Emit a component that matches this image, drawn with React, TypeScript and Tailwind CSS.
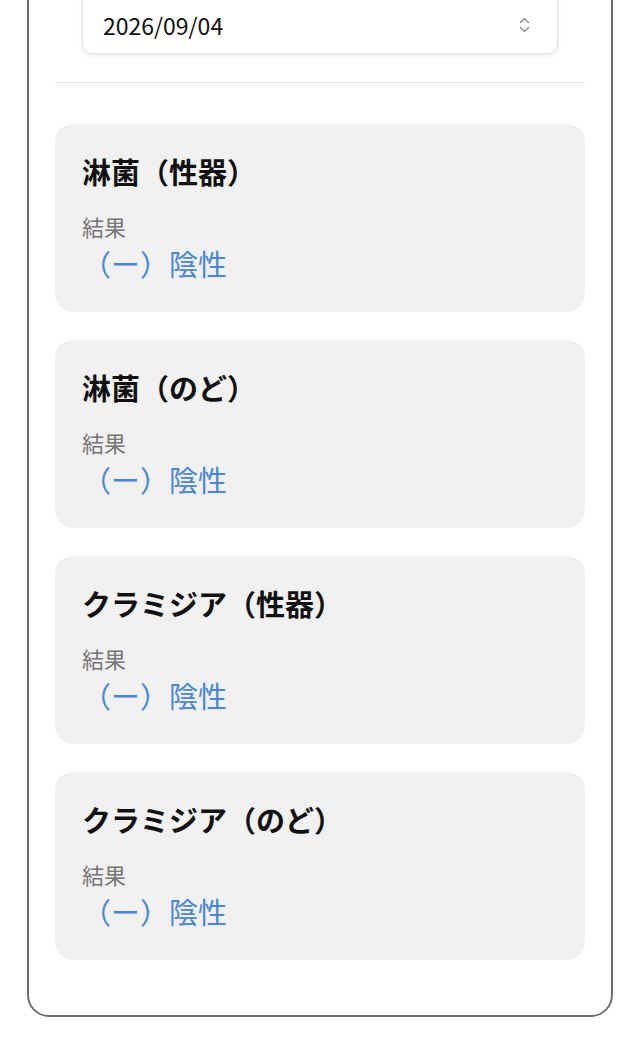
import React from 'react';

const results = [
  { id: 1, name: '淋菌（性器）', value: '（ー）陰性' },
  { id: 2, name: '淋菌（のど）', value: '（ー）陰性' },
  { id: 3, name: 'クラミジア（性器）', value: '（ー）陰性' },
  { id: 4, name: 'クラミジア（のど）', value: '（ー）陰性' },
];

// small up/down chevron used in the native date select
const UpDownIcon = () => (
  <svg width="11" height="16" viewBox="0 0 11 16" fill="none" className="text-[#8e8e8e]">
    <path d="M1.5 5.5 L5.5 1.5 L9.5 5.5" stroke="currentColor" strokeWidth="1.4" strokeLinecap="round" strokeLinejoin="round" />
    <path d="M1.5 10.5 L5.5 14.5 L9.5 10.5" stroke="currentColor" strokeWidth="1.4" strokeLinecap="round" strokeLinejoin="round" />
  </svg>
);

const ResultCard = ({ name, value }: { name: string; value: string }) => (
  <div className="bg-[#f1f1f1] rounded-[18px] px-[27px] pt-[28px] pb-[29px]">
    <div className="text-[29px] leading-[38px] font-bold text-[#111]">{name}</div>
    <div className="mt-[21px] text-[22px] leading-[30px] text-[#767676]">結果</div>
    <div className="mt-[2px] text-[29px] leading-[40px] text-[#4a86d6]">{value}</div>
  </div>
);

const App = () => {
  return (
    <div
      className="min-h-screen bg-white px-[27px] pb-[38px] overflow-hidden"
      style={{ fontFamily: '"Noto Sans CJK JP", "Noto Sans", sans-serif' }}
    >
      <div className="-mt-[30px] border-2 border-[#6f6f6f] rounded-b-[22px] px-[26px] pt-[18px] pb-[55px]">
        <div className="px-[27px]">
          <div className="h-[64px] bg-white border border-[#e6e6e6] rounded-[10px] shadow-[0_2px_4px_rgba(0,0,0,0.08)] flex items-end justify-between pl-[20px] pr-[27px] pb-[13px]">
            <span className="text-[23px] leading-[30px] text-[#111]">2026/09/04</span>
            <div className="mb-[7px]">
              <UpDownIcon />
            </div>
          </div>
        </div>

        <div className="mt-[28px] h-px bg-[#e3e3e3]" />

        <div className="mt-[41px] flex flex-col gap-[28px]">
          {results.map((r) => (
            <ResultCard key={r.id} name={r.name} value={r.value} />
          ))}
        </div>
      </div>
    </div>
  );
};

export default App;
